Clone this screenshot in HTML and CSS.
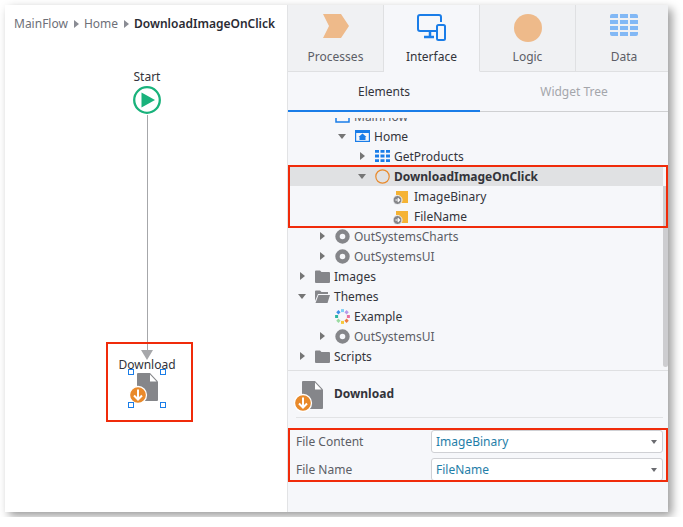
FILE: index.html
```html
<!DOCTYPE html>
<html>
<head>
    <title>DownloadImageOnClick</title>
    <link rel="stylesheet" href="styles.css">
</head>
<body>
    <svg class="defs" width="0" height="0">
        <symbol id="module" viewBox="0 0 15 15"><circle cx="7.5" cy="7.5" r="5" fill="none" stroke="#85868a" stroke-width="4.4"/></symbol>
        <symbol id="folder" viewBox="0 0 15 13"><path d="M0 1.5 Q0 .5 1 .5 H5 L6.5 2 H14 Q15 2 15 3 V12 Q15 13 14 13 H1 Q0 13 0 12 Z" fill="#85868a"/></symbol>
        <symbol id="input" viewBox="-3 0 18 18">
            <rect x="1" y="4" width="12" height="12" fill="#f5b335"/>
            <circle cx="2.500" cy="13" r="4.500" fill="#85868a" stroke="#f6f7fa" stroke-width="1"/>
            <path d="M.4 13 H4.400 M2.800 11.200 L4.600 13 L2.800 14.800" fill="none" stroke="#fff" stroke-width="1.100"/>
        </symbol>
        <symbol id="download" viewBox="0 0 29 31">
            <path d="M9 0 H21 L29 8.500 V27 Q29 28 28 28 H9 Q8 28 8 27 V1 Q8 0 9 0 Z" fill="#85868a"/>
            <path d="M21 1.500 V8.500 H27.500 Z" fill="#fff"/>
            <circle cx="9" cy="22" r="8.500" fill="#e98a2b" stroke="#fff" stroke-width="1.300"/>
            <path d="M9 16.500 V26 M5 22.500 L9 26.500 L13 22.500" fill="none" stroke="#fff" stroke-width="2"/>
        </symbol>
    </svg>

    <div class="window">
        <!-- Flow canvas -->
        <div class="canvas">
            <div class="crumbs">
                <span>MainFlow</span><i class="crumb-arrow"></i>
                <span>Home</span><i class="crumb-arrow"></i>
                <b>DownloadImageOnClick</b>
            </div>

            <div class="node-label start-label">Start</div>
            <svg class="start-icon" width="30" height="30" viewBox="0 0 30 30">
                <circle cx="15" cy="15" r="12.800" fill="#fff" stroke="#19b27b" stroke-width="2.300"/>
                <path d="M9.500 7.500 L23 15 L9.500 22.500 Z" fill="#19b27b"/>
            </svg>
            <div class="flow-line"></div>
            <div class="flow-head"></div>
            <div class="node-label download-label">Download</div>
            <svg class="download-icon" width="29" height="31"><use href="#download"/></svg>
            <i class="handle h-tl"></i><i class="handle h-tr"></i>
            <i class="handle h-bl"></i><i class="handle h-br"></i>
            <div class="mark mark-node"></div>
        </div>

        <!-- Right side panel -->
        <div class="panel">
            <div class="tabs">
                <div class="tab">
                    <svg width="28" height="24" viewBox="0 0 28 24"><path d="M1 0 H19 L27 12 L19 24 H1 L7 12 Z" fill="#eeba8a"/></svg>
                    <span>Processes</span>
                </div>
                <div class="tab active">
                    <svg width="30" height="27" viewBox="0 0 30 27" fill="none" stroke="#1a7de8" stroke-width="2">
                        <path d="M20 17 H3 Q1 17 1 15 V3 Q1 1 3 1 H22 Q24 1 24 3 V8"/>
                        <path d="M13 17 V22 M7 23 H17" stroke-width="2.500"/>
                        <rect x="20" y="11" width="8" height="15" rx="1.500"/>
                    </svg>
                    <span>Interface</span>
                </div>
                <div class="tab">
                    <svg width="28" height="28"><circle cx="14" cy="14" r="14" fill="#eeba8a"/></svg>
                    <span>Logic</span>
                </div>
                <div class="tab last">
                    <svg width="28" height="22" viewBox="0 0 28 22" fill="#82b8f5">
                        <path d="M0 2 Q0 0 2 0 H8 V4 H0 Z M10 0 H18 V4 H10 Z M20 0 H26 Q28 0 28 2 V4 H20 Z"/>
                        <path d="M0 6 H8 V10 H0 Z M10 6 H18 V10 H10 Z M20 6 H28 V10 H20 Z"/>
                        <path d="M0 12 H8 V16 H0 Z M10 12 H18 V16 H10 Z M20 12 H28 V16 H20 Z"/>
                        <path d="M0 18 H8 V22 H2 Q0 22 0 20 Z M10 18 H18 V22 H10 Z M20 18 H28 V20 Q28 22 26 22 H20 Z"/>
                    </svg>
                    <span>Data</span>
                </div>
            </div>

            <div class="subtabs">
                <div class="subtab active">Elements</div>
                <div class="subtab">Widget Tree</div>
            </div>

            <div class="tree">
                <div class="scroll-thumb"></div>
                <div class="rows-clip">
                    <div class="rows">
                        <div class="row level1">
                            <i class="twist"></i>
                            <svg class="icon" width="15" height="14"><rect x="1" y="1" width="13" height="12" fill="none" stroke="#1a7de8" stroke-width="1.500"/></svg>
                            <span class="muted">MainFlow</span>
                        </div>
                        <div class="row level2">
                            <i class="twist open"></i>
                            <svg class="icon" width="15" height="12" viewBox="0 0 15 12">
                                <rect x=".6" y=".6" width="13.800" height="10.800" fill="none" stroke="#1a7de8" stroke-width="1.200"/>
                                <path d="M0 0 H15 V3 H0 Z" fill="#1a7de8"/>
                                <path d="M7.500 3.500 L11.500 7 H10.500 V10 H4.500 V7 H3.500 Z" fill="#1a7de8"/>
                            </svg>
                            <span>Home</span>
                        </div>
                        <div class="row level3">
                            <i class="twist closed"></i>
                            <svg class="icon" width="15" height="12" viewBox="0 0 15 12" fill="#1a7de8">
                                <path d="M0 0 H4 V2.800 H0 Z M5.500 0 H9.500 V2.800 H5.500 Z M11 0 H15 V2.800 H11 Z M0 4.600 H4 V7.400 H0 Z M5.500 4.600 H9.500 V7.400 H5.500 Z M11 4.600 H15 V7.400 H11 Z M0 9.200 H4 V12 H0 Z M5.500 9.200 H9.500 V12 H5.500 Z M11 9.200 H15 V12 H11 Z"/>
                            </svg>
                            <span>GetProducts</span>
                        </div>
                        <div class="row level3 selected">
                            <i class="twist open"></i>
                            <svg class="icon" width="15" height="15"><circle cx="7.500" cy="7.500" r="6.700" fill="none" stroke="#e98a2b" stroke-width="1.200"/></svg>
                            <b>DownloadImageOnClick</b>
                        </div>
                        <div class="row level4">
                            <i class="twist none"></i>
                            <svg class="icon icon-input" width="18" height="18"><use href="#input"/></svg>
                            <span>ImageBinary</span>
                        </div>
                        <div class="row level4">
                            <i class="twist none"></i>
                            <svg class="icon icon-input" width="18" height="18"><use href="#input"/></svg>
                            <span>FileName</span>
                        </div>
                        <div class="row level1">
                            <i class="twist closed"></i>
                            <svg class="icon" width="15" height="15"><use href="#module"/></svg>
                            <span class="muted">OutSystemsCharts</span>
                        </div>
                        <div class="row level1">
                            <i class="twist closed"></i>
                            <svg class="icon" width="15" height="15"><use href="#module"/></svg>
                            <span class="muted">OutSystemsUI</span>
                        </div>
                        <div class="row level0">
                            <i class="twist closed"></i>
                            <svg class="icon" width="15" height="13"><use href="#folder"/></svg>
                            <span>Images</span>
                        </div>
                        <div class="row level0">
                            <i class="twist open"></i>
                            <svg class="icon" width="15" height="13" viewBox="0 0 15 13">
                                <path d="M0 1.500 Q0 .5 1 .5 H5 L6.500 2 H13 V4 H3 L0 11 Z" fill="#85868a"/>
                                <path d="M3.500 5 H15 L12.500 13 H.5 Z" fill="#85868a"/>
                            </svg>
                            <span>Themes</span>
                        </div>
                        <div class="row level1">
                            <i class="twist none"></i>
                            <svg class="icon" width="15" height="15" viewBox="0 0 15 15" fill="none" stroke-width="3">
                                <path d="M6 1.600 L9 1.600" stroke="#7fd0f5"/>
                                <path d="M10.500 2.200 L12.700 4.300" stroke="#b79be8"/>
                                <path d="M13.400 6 V9" stroke="#e8709f"/>
                                <path d="M12.700 10.700 L10.500 12.800" stroke="#ee7a3c"/>
                                <path d="M9 13.400 H6" stroke="#f5c93a"/>
                                <path d="M4.500 12.800 L2.300 10.700" stroke="#9adba2"/>
                                <path d="M1.600 9 V6" stroke="#2bb7a0"/>
                                <path d="M2.300 4.300 L4.500 2.200" stroke="#3d8fe8"/>
                            </svg>
                            <span>Example</span>
                        </div>
                        <div class="row level1">
                            <i class="twist closed"></i>
                            <svg class="icon" width="15" height="15"><use href="#module"/></svg>
                            <span class="muted">OutSystemsUI</span>
                        </div>
                        <div class="row level0">
                            <i class="twist closed"></i>
                            <svg class="icon" width="15" height="13"><use href="#folder"/></svg>
                            <span>Scripts</span>
                        </div>
                    </div>
                </div>
                <div class="mark mark-rows"></div>
            </div>

            <div class="details">
                <div class="details-head">
                    <svg width="29" height="31"><use href="#download"/></svg>
                    <b>Download</b>
                </div>
                <div class="fields">
                    <div class="field">
                        <label>File Content</label>
                        <div class="select">ImageBinary<i class="select-caret"></i></div>
                    </div>
                    <div class="field">
                        <label>File Name</label>
                        <div class="select">FileName<i class="select-caret"></i></div>
                    </div>
                    <div class="mark mark-fields"></div>
                </div>
            </div>
        </div>
    </div>
</body>
</html>
```

FILE: styles.css
```css
/* Page */
body {
    margin: 0;
    background-color: #fff;
    font-family: "Noto Sans", sans-serif;
    font-size: 12px;
    color: #33343a;
}

.defs {
    position: absolute;
}

.window {
    display: flex;
    width: 663px;
    height: 507px;
    margin: 5px;
    box-shadow: 4px 4px 9px rgba(0, 0, 0, 0.4);
}

/* Red annotation boxes */
.mark {
    position: absolute;
    box-sizing: border-box;
    border: 2px solid #f02b0a;
}

.mark-node {
    left: 101px;
    top: 337px;
    width: 87px;
    height: 80px;
}

.mark-rows {
    left: 0;
    top: 53px;
    width: 380px;
    height: 63px;
}

.mark-fields {
    left: 0;
    top: -1px;
    width: 380px;
    height: 54px;
}

/* Canvas */
.canvas {
    position: relative;
    flex: none;
    width: 282px;
    background-color: #fff;
    border-right: 1px solid #e2e3e5;
}

.crumbs {
    display: flex;
    align-items: center;
    padding: 10px 0 0 9px;
    color: #6e7078;
    white-space: nowrap;
}

.crumbs b {
    color: #2a2b33;
    font-weight: 600;
}

.crumb-arrow {
    width: 0;
    height: 0;
    margin: 0 5px 0 6px;
    border-left: 5px solid #8a8c94;
    border-top: 4px solid transparent;
    border-bottom: 4px solid transparent;
}

.node-label {
    position: absolute;
    left: 92px;
    width: 100px;
    text-align: center;
    line-height: 16px;
}

.start-label {
    top: 64px;
}

.download-label {
    top: 352px;
}

.start-icon {
    position: absolute;
    left: 127px;
    top: 80px;
}

.flow-line {
    position: absolute;
    left: 142px;
    top: 110px;
    width: 1px;
    height: 236px;
    background-color: #a6a7aa;
}

.flow-head {
    position: absolute;
    left: 136px;
    top: 345px;
    border-top: 10px solid #a6a7aa;
    border-left: 6px solid transparent;
    border-right: 6px solid transparent;
}

.download-icon {
    position: absolute;
    left: 124px;
    top: 368px;
}

.handle {
    position: absolute;
    box-sizing: border-box;
    width: 6px;
    height: 6px;
    background-color: #fff;
    border: 1px solid #1a7de8;
}

.h-tl { left: 123px; top: 364px; }
.h-tr { left: 155px; top: 364px; }
.h-bl { left: 123px; top: 397px; }
.h-br { left: 155px; top: 397px; }

/* Panel */
.panel {
    flex: 1;
    display: flex;
    flex-direction: column;
    min-width: 0;
    background-color: #f6f7fa;
}

.tabs {
    display: flex;
    height: 67px;
    overflow: hidden;
}

.tab {
    flex: none;
    box-sizing: border-box;
    width: 96px;
    height: 67px;
    display: flex;
    flex-direction: column;
    align-items: center;
    justify-content: flex-end;
    padding-bottom: 6px;
    background-color: #f0f1f3;
    border-right: 1px solid #dfe0e2;
    border-bottom: 1px solid #dfe0e2;
    color: #5c5e66;
}

.tab svg {
    margin-bottom: auto;
    margin-top: 9px;
}

.tab.active {
    background-color: #f6f7fa;
    border-bottom-color: #f6f7fa;
    color: #33343a;
}

.tab.last {
    border-right: none;
}

.subtabs {
    display: flex;
    height: 40px;
}

.subtab {
    box-sizing: border-box;
    width: 192px;
    line-height: 39px;
    text-align: center;
    border-bottom: 1px solid #cfd0d2;
    color: #a4a6ab;
}

.subtab.active {
    color: #33343a;
    border-bottom: 2px solid #1a7de8;
}

.subtab:last-child {
    flex: 1;
}

/* Tree */
.tree {
    position: relative;
    padding-top: 6px;
    border-bottom: 1px solid #dfe0e2;
}

/* the top row is scrolled half out of view */
.rows-clip {
    height: 252px;
    overflow: hidden;
}

.rows {
    margin-top: -12px;
    width: 375px;
}

.scroll-thumb {
    position: absolute;
    right: 0;
    top: 74px;
    width: 5px;
    height: 181px;
    border-radius: 0 0 3px 3px;
    background-color: #cdcdd0;
}

.row {
    display: flex;
    align-items: center;
    height: 20px;
    white-space: nowrap;
}

.row b {
    font-weight: 700;
}

.row.selected {
    background-color: #e0e1e3;
}

.level0 { padding-left: 4px; }
.level1 { padding-left: 24px; }
.level2 { padding-left: 44px; }
.level3 { padding-left: 64px; }
.level4 { padding-left: 84px; }

.twist {
    flex: none;
    width: 20px;
    display: flex;
    justify-content: center;
}

.twist.closed::before {
    content: "";
    border-left: 5px solid #757575;
    border-top: 4px solid transparent;
    border-bottom: 4px solid transparent;
}

.twist.open::before {
    content: "";
    border-top: 5px solid #757575;
    border-left: 4px solid transparent;
    border-right: 4px solid transparent;
}

.icon {
    flex: none;
    margin: 0 4px 0 3px;
}

.icon-input {
    margin-left: 0;
}

.muted {
    color: #5c5e66;
}

/* Details */
.details {
    flex: 1;
    padding: 0 5px 0 8px;
}

.details-head {
    display: flex;
    align-items: center;
    height: 46px;
    border-bottom: 1px solid #e2e3e5;
}

.details-head svg {
    margin: 5px 11px 0 -2px;
}

.details-head b {
    margin-bottom: 2px;
    font-weight: 700;
}

.fields {
    position: relative;
    margin: 11px -5px 0 -8px;
    padding: 1px 5px 0 8px;
}

.field {
    display: flex;
    align-items: center;
    height: 23px;
    margin-bottom: 5px;
}

.field label {
    width: 135px;
    color: #5c5e66;
}

.select {
    position: relative;
    flex: 1;
    box-sizing: border-box;
    height: 23px;
    line-height: 21px;
    padding-left: 4px;
    background-color: #fff;
    border: 1px solid #cfd0d4;
    border-radius: 3px;
    color: #1f7ea8;
}

.select-caret {
    position: absolute;
    right: 5px;
    top: 9px;
    border-top: 4px solid #6a6b70;
    border-left: 3px solid transparent;
    border-right: 3px solid transparent;
}
```
